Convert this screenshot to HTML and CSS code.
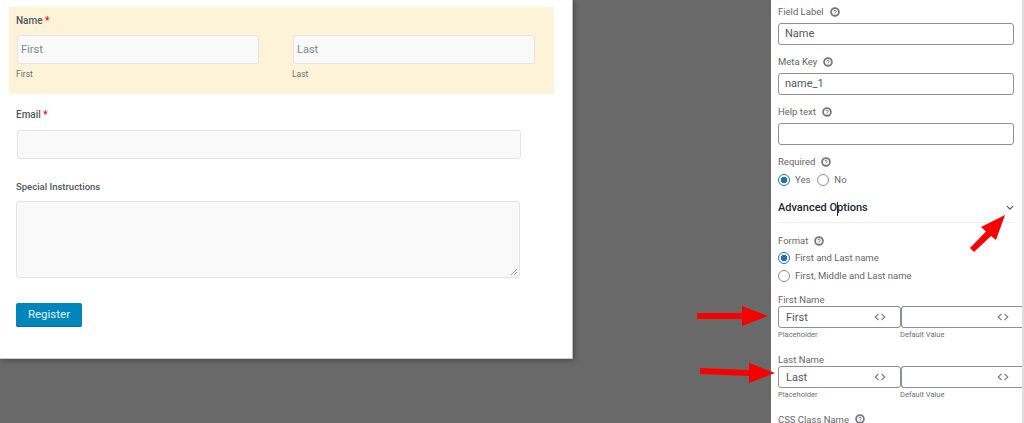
FILE: index.html
```html
<!DOCTYPE html>
<html lang="en">
<head>
<meta charset="utf-8">
<title>Form builder</title>
<link rel="stylesheet" href="styles.css">
</head>
<body>
<main class="canvas">
  <section class="preview">
    <div class="name-block">
      <div class="f-label">Name <span class="req">*</span></div>
      <div class="name-cols">
        <div class="name-col">
          <div class="f-input ph">First</div>
          <div class="sub">First</div>
        </div>
        <div class="name-col second">
          <div class="f-input ph">Last</div>
          <div class="sub">Last</div>
        </div>
      </div>
    </div>
    <div class="f-label email-label">Email <span class="req">*</span></div>
    <div class="f-input email"></div>
    <div class="f-label special-label">Special Instructions</div>
    <div class="f-input area">
      <svg class="grip" width="8" height="8" viewBox="0 0 8 8"><path d="M1 7 7 1M4 7 7 4" stroke="#999" stroke-width="1" fill="none"/></svg>
    </div>
    <div class="reg">Register</div>
  </section>

  <aside class="side">
    <div class="s-label first-label">Field Label <svg class="help"><use href="#q"/></svg></div>
    <div class="s-input">Name</div>
    <div class="s-label">Meta Key <svg class="help"><use href="#q"/></svg></div>
    <div class="s-input">name_1</div>
    <div class="s-label">Help text <svg class="help"><use href="#q"/></svg></div>
    <div class="s-input"></div>
    <div class="s-label required">Required <svg class="help"><use href="#q"/></svg></div>
    <div class="radios">
      <span class="radio on"></span><span class="r-text">Yes</span>
      <span class="radio"></span><span class="r-text">No</span>
    </div>
    <div class="adv">
      <span>Advanced O<i class="caret"></i>ptions</span>
      <svg class="chev" width="8" height="6" viewBox="0 0 8 6"><path d="M1 1.200 4 4.200 7 1.200" fill="none" stroke="#555" stroke-width="1.200"/></svg>
    </div>
    <div class="s-label format">Format <svg class="help"><use href="#q"/></svg></div>
    <div class="radio-row"><span class="radio on"></span><span class="r-text">First and Last name</span></div>
    <div class="radio-row"><span class="radio"></span><span class="r-text">First, Middle and Last name</span></div>

    <div class="s-label pair-label">First Name</div>
    <div class="pair">
      <div class="cell"><span>First</span><svg class="code"><use href="#c"/></svg></div>
      <div class="cell"><span></span><svg class="code"><use href="#c"/></svg></div>
    </div>
    <div class="pair-sub"><span>Placeholder</span><span>Default Value</span></div>

    <div class="s-label pair-label next">Last Name</div>
    <div class="pair">
      <div class="cell"><span>Last</span><svg class="code"><use href="#c"/></svg></div>
      <div class="cell"><span></span><svg class="code"><use href="#c"/></svg></div>
    </div>
    <div class="pair-sub"><span>Placeholder</span><span>Default Value</span></div>

    <div class="s-label css-name">CSS Class Name <svg class="help"><use href="#q"/></svg></div>
  </aside>

  <svg class="arrow a1" width="40" height="42" viewBox="0 0 40 42"><path d="M37 2 13 14 18 18.500 2 35 6 39 23 23 28 27Z" fill="#f90000"/></svg>
  <svg class="arrow a2" width="71" height="20" viewBox="0 0 71 20"><path d="M0 7H45V0L71 10 45 20V13H0Z" fill="#f90000"/></svg>
  <svg class="arrow a3" width="75" height="20" viewBox="0 0 75 20"><path d="M0 5 49 7V0L75 10 49 20V13L0 11Z" fill="#f90000"/></svg>
</main>

<svg class="defs" width="0" height="0" aria-hidden="true">
  <symbol id="q" viewBox="0 0 10 10">
    <circle cx="5" cy="5" r="3.900" fill="none" stroke="#777" stroke-width="1.800"/>
    <path d="M3.800 4.200C3.900 2.900 6.300 2.900 6.200 4.300 6.100 5.100 5 5 5 6" fill="none" stroke="#777" stroke-width="1"/>
    <circle cx="5" cy="7.100" r=".6" fill="#777"/>
  </symbol>
  <symbol id="c" viewBox="0 0 12 8">
    <path d="M4.500 .8 1.200 4 4.500 7.200M7.500 .8 10.800 4 7.500 7.200" fill="none" stroke="#777" stroke-width="1.100"/>
  </symbol>
</svg>
</body>
</html>
```

FILE: styles.css
```css
* { box-sizing: border-box; }
html, body { margin: 0; padding: 0; height: 423px; overflow: hidden; }
body { font-family: Roboto, "Liberation Sans", sans-serif; background: #696969; }
.canvas { position: relative; display: flex; justify-content: space-between; align-items: flex-start; width: 1024px; height: 423px; overflow: hidden; }
.defs { position: absolute; }

/* Left form preview */
.preview { width: 573px; height: 359px; background: #fff; padding: 7px 0 0 16px; border-bottom: 1px solid #ccc; border-right: 1px solid #bbb; box-shadow: 1px 1px 5px rgba(0,0,0,.35); }
.name-block { width: 545px; height: 87px; margin-left: -7px; background: #fdf3d9; padding: 7px 0 0 7px; }
.f-label { font-size: 10px; line-height: 13px; font-weight: 500; color: #50575e; }
.req { color: #f00; }
.name-cols { display: flex; margin-top: 8px; padding-left: 1px; }
.name-col { width: 241.500px; }
.name-col.second { margin-left: 34.500px; }
.f-input { background: #f9f9f9; border: 1px solid #e4e4e4; border-radius: 3px; }
.name-col .f-input { height: 29px; }
.ph { font-size: 11px; line-height: 27px; padding-left: 3px; color: #80868b; }
.sub { font-size: 8.500px; line-height: 11px; color: #6a6f74; margin: 5px 0 0 -1px; }
.email-label { margin-top: 14px; }
.f-input.email { width: 504px; height: 29px; margin: 9px 0 0 1px; }
.special-label { margin-top: 21px; font-size: 9.500px; }
.f-input.area { position: relative; width: 504px; height: 77px; margin-top: 8px; }
.grip { position: absolute; right: 1px; bottom: 1px; }
.reg { width: 66px; height: 24px; margin-top: 25px; background: #0085ba; border-bottom: 1px solid #006f9c; border-radius: 2px; color: #e3f0f6; font-size: 11.500px; line-height: 22px; text-align: center; }

/* Right settings panel */
.side { width: 253px; height: 423px; background: #fff; padding: 5px 0 0 7px; border-right: 2px solid #ddd; overflow: hidden; }
.s-label { display: flex; align-items: center; gap: 6px; font-size: 9.500px; line-height: 13px; color: #666; margin-top: 10px; white-space: nowrap; }
.first-label { margin-top: 0; }
.help { width: 10px; height: 10px; }
.s-input { width: 236px; height: 22px; margin-top: 5px; border: 1px solid #8c8f94; border-radius: 3px; font-size: 11px; line-height: 20px; padding-left: 6px; color: #50575e; }
.required { margin-top: 10px; }
.radios { display: flex; align-items: center; height: 14px; margin-top: 5px; }
.radio { width: 12px; height: 12px; flex: none; border: 1px solid #8c8f94; border-radius: 50%; background: #fff; }
.radio.on { border-color: #2271b1; background: radial-gradient(circle, #2271b1 0 3px, #fff 3.600px); }
.r-text { font-size: 9.500px; line-height: 14px; color: #666; margin-left: 5px; margin-right: 7px; white-space: nowrap; }
.adv { display: flex; justify-content: space-between; align-items: center; width: 236px; height: 29px; margin-top: 7px; padding-top: 1px; border-bottom: 1px solid #eee; font-size: 11px; font-weight: 500; color: #23282d; }
.chev { margin-bottom: 2px; }
.caret { display: inline-block; width: 0; height: 14px; margin-right: -1px; border-left: 1px solid #23282d; vertical-align: middle; }
.format { margin-top: 11px; }
.radio-row { display: flex; align-items: center; height: 14px; margin-top: 4px; }
.pair-label { margin-top: 10px; }
.pair-label.next { margin-top: 13px; }
.pair { display: flex; }
.cell { display: flex; justify-content: space-between; align-items: center; width: 123px; height: 22px; flex: none; border: 1px solid #8c8f94; border-radius: 3px; font-size: 11px; color: #50575e; padding: 0 14px 0 7px; }
.cell + .cell { border-right: 0; padding-right: 15px; }
.code { width: 12px; height: 8px; margin-bottom: 1px; }
.pair-sub { display: flex; font-size: 7.500px; line-height: 10px; color: #6a6f74; margin-top: 2px; }
.pair-sub span { width: 122px; }
.css-name { margin-top: 14px; line-height: 9px; }

/* Annotation arrows */
.arrow { position: absolute; }
.a1 { left: 968px; top: 213px; }
.a2 { left: 697px; top: 306px; }
.a3 { left: 700px; top: 363px; }
```
